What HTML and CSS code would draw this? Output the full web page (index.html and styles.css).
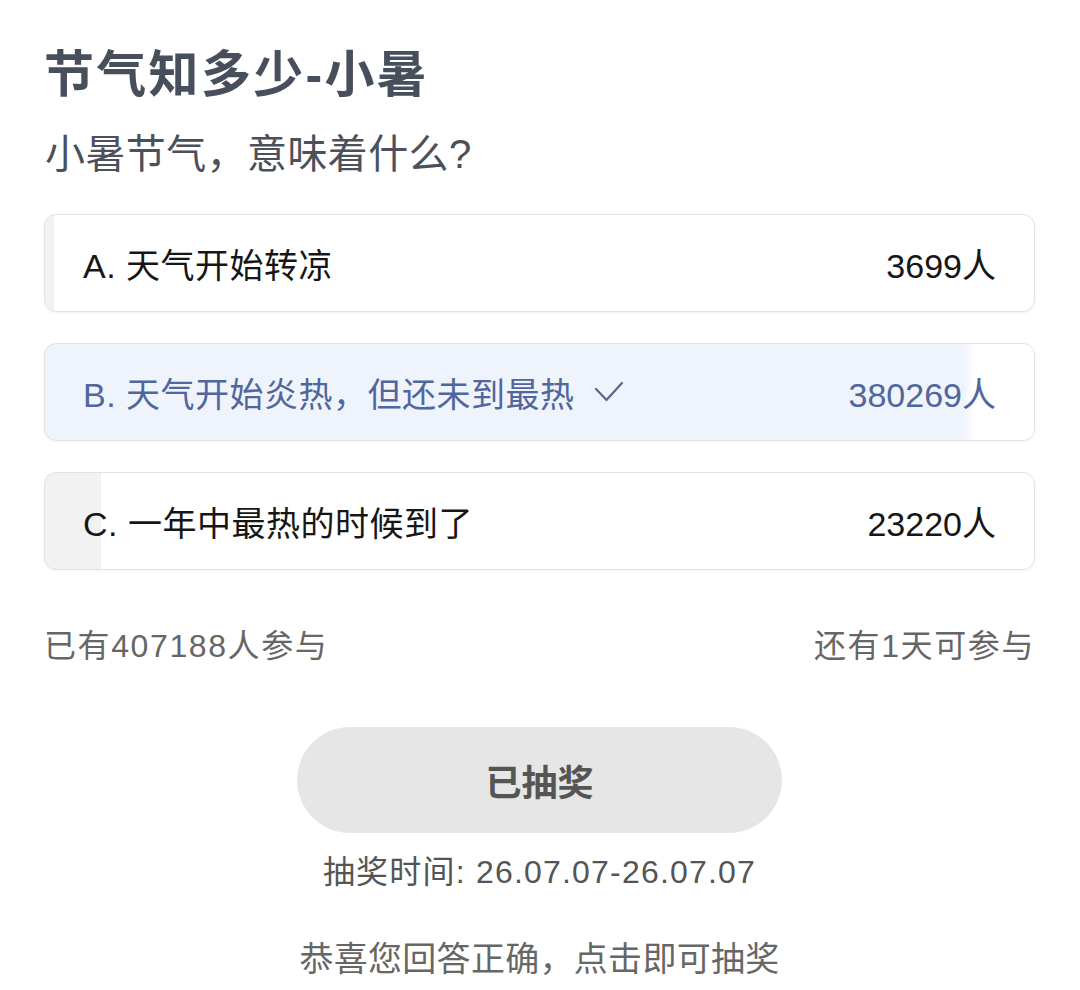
FILE: index.html
```html
<!DOCTYPE html>
<html lang="zh-CN">
<head>
  <meta charset="UTF-8">
  <title>节气知多少-小暑</title>
  <link rel="stylesheet" href="styles.css">
</head>

<body>

  <div class="quiz">

    <h1 class="quiz-title">节气知多少-小暑</h1>
    <p class="quiz-question">小暑节气，意味着什么?</p>

    <!-- Options, fill width = share of votes -->
    <div class="options">
      <div class="option" style="--pct: 0.9%">
        <span class="option-text">A. 天气开始转凉</span>
        <span class="option-count">3699人</span>
      </div>
      <div class="option option-correct" style="--pct: 93.4%">
        <span class="option-text">B. 天气开始炎热，但还未到最热
          <svg class="check" width="30" height="24" viewBox="0 0 30 24">
            <path d="M2 9 L12.5 20 L28 3" fill="none" stroke="#5b6785" stroke-width="2.2" stroke-linecap="round" stroke-linejoin="round"/>
          </svg>
        </span>
        <span class="option-count">380269人</span>
      </div>
      <div class="option" style="--pct: 5.7%">
        <span class="option-text">C. 一年中最热的时候到了</span>
        <span class="option-count">23220人</span>
      </div>
    </div>

    <div class="stats">
      <span>已有407188人参与</span>
      <span>还有1天可参与</span>
    </div>

    <div class="draw">
      <button class="draw-btn">已抽奖</button>
      <p class="draw-time">抽奖时间: 26.07.07-26.07.07</p>
      <p class="draw-note">恭喜您回答正确，点击即可抽奖</p>
    </div>

  </div>

</body>
</html>
```

FILE: styles.css
```css
    body {
      margin: 0;
      background: #fff;
      font-family: 'Liberation Sans', 'Noto Sans CJK SC', sans-serif;
    }

    .quiz {
      padding: 46px 45px 0 44px;
    }

    .quiz-title {
      margin: 0;
      font-size: 50px;
      line-height: 58px;
      letter-spacing: 2.3px;
      font-weight: bold;
      color: #484f5c;
    }

    .quiz-question {
      margin: 24px 0 0 1px;
      font-size: 40px;
      line-height: 52px;
      letter-spacing: 0.4px;
      color: #4b505b;
    }

    .options {
      margin-top: 34px;
      display: flex;
      flex-direction: column;
      gap: 31px;
    }

    .option {
      height: 98px;
      box-sizing: border-box;
      display: flex;
      align-items: center;
      justify-content: space-between;
      padding: 0 38px 0 38px;
      border: 1px solid #e3e3e3;
      border-radius: 12px;
      box-shadow: 0 1px 3px rgba(0, 0, 0, 0.05);
      background: linear-gradient(to right, #f2f2f2 var(--pct), #fff var(--pct));
      font-size: 34px;
      letter-spacing: 0.5px;
      color: #161616;
    }

    .option-correct {
      background: linear-gradient(to right, #eef3fc calc(var(--pct) - 6px), #fff calc(var(--pct) + 6px));
      color: #50669c;
    }

    .option-count {
      letter-spacing: 0;
    }

    .option-text {
      display: flex;
      align-items: center;
    }

    .check {
      margin-left: 19px;
    }

    .stats {
      margin-top: 56px;
      display: flex;
      justify-content: space-between;
      font-size: 32px;
      line-height: 40px;
      letter-spacing: 1.6px;
      color: #666;
    }

    .draw {
      display: flex;
      flex-direction: column;
      align-items: center;
    }

    .draw-btn {
      margin-top: 61px;
      width: 485px;
      height: 106px;
      border: none;
      border-radius: 53px;
      background: #e6e6e6;
      font-family: inherit;
      font-size: 36px;
      font-weight: bold;
      color: #555;
    }

    .draw-time {
      margin: 19px 0 0;
      font-size: 32px;
      line-height: 40px;
      letter-spacing: 1.2px;
      color: #555;
    }

    .draw-note {
      margin: 45px 0 0;
      font-size: 34px;
      line-height: 44px;
      letter-spacing: 0.3px;
      color: #666;
    }
```
